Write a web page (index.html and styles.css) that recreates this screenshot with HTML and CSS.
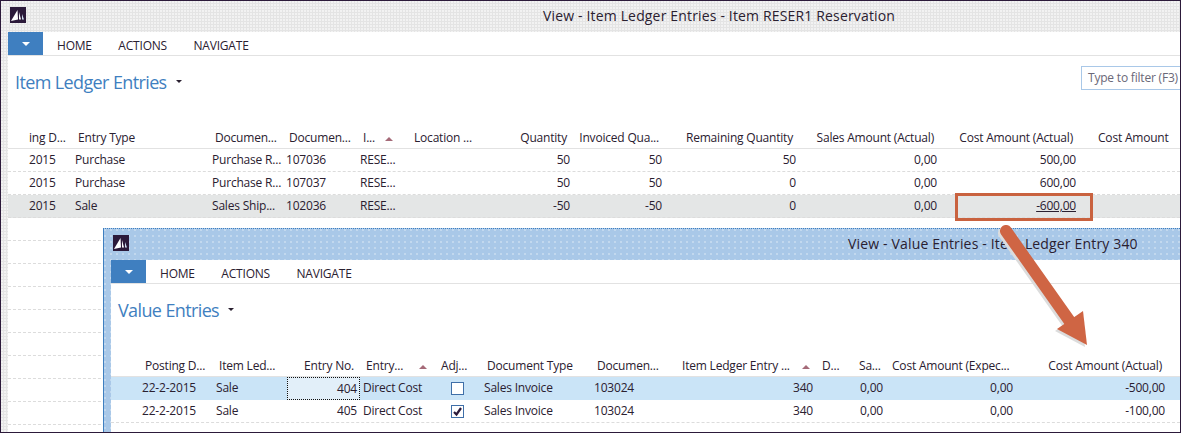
FILE: index.html
```html
<!DOCTYPE html>
<html lang="en">
<head>
    <meta charset="UTF-8">
    <title>Item Ledger Entries</title>
    <link rel="stylesheet" href="styles.css">
</head>
<body>
    <div class="window outer">
        <div class="titlebar">
            <svg class="logo" viewBox="0 0 16 16"><rect width="16" height="16" fill="#2c1a3a"/><path d="M1 14 L7.500 3 L8 12.500 Z" fill="#fff"/><path d="M9 12.500 V5 L11 12.500 Z" fill="#fff"/><path d="M12 12.500 V7 L14 12.500 Z" fill="#cfe0f2"/></svg>
            <div class="wintitle">View - Item Ledger Entries - Item RESER1 Reservation</div>
        </div>
        <div class="pane">
            <div class="ribbon">
                <div class="appbtn"><span class="caret"></span></div>
                <span class="tab">HOME</span>
                <span class="tab">ACTIONS</span>
                <span class="tab">NAVIGATE</span>
            </div>
            <div class="pagehead">
                <span class="pagetitle">Item Ledger Entries</span>
                <span class="titlecaret"></span>
                <div class="filter">Type to filter (F3)</div>
            </div>
            <div class="grid">
                <div class="row head">
                    <div class="cell">ing D...</div>
                    <div class="cell">Entry Type</div>
                    <div class="cell">Documen...</div>
                    <div class="cell">Documen...</div>
                    <div class="cell">I...<span class="sort sort-i"></span></div>
                    <div class="cell">Location ...</div>
                    <div class="cell num">Quantity</div>
                    <div class="cell num">Invoiced Qua...</div>
                    <div class="cell num">Remaining Quantity</div>
                    <div class="cell num">Sales Amount (Actual)</div>
                    <div class="cell num">Cost Amount (Actual)</div>
                    <div class="cell last">Cost Amount</div>
                </div>
                <div class="row">
                    <div class="cell">2015</div>
                    <div class="cell">Purchase</div>
                    <div class="cell">Purchase R...</div>
                    <div class="cell">107036</div>
                    <div class="cell">RESE...</div>
                    <div class="cell"></div>
                    <div class="cell num">50</div>
                    <div class="cell num">50</div>
                    <div class="cell num">50</div>
                    <div class="cell num">0,00</div>
                    <div class="cell num">500,00</div>
                    <div class="cell"></div>
                </div>
                <div class="row">
                    <div class="cell">2015</div>
                    <div class="cell">Purchase</div>
                    <div class="cell">Purchase R...</div>
                    <div class="cell">107037</div>
                    <div class="cell">RESE...</div>
                    <div class="cell"></div>
                    <div class="cell num">50</div>
                    <div class="cell num">50</div>
                    <div class="cell num">0</div>
                    <div class="cell num">0,00</div>
                    <div class="cell num">600,00</div>
                    <div class="cell"></div>
                </div>
                <div class="row current">
                    <div class="cell">2015</div>
                    <div class="cell">Sale</div>
                    <div class="cell">Sales Ship...</div>
                    <div class="cell">102036</div>
                    <div class="cell">RESE...</div>
                    <div class="cell"></div>
                    <div class="cell num">-50</div>
                    <div class="cell num">-50</div>
                    <div class="cell num">0</div>
                    <div class="cell num">0,00</div>
                    <div class="cell num"><span class="link">-600,00</span></div>
                    <div class="cell"></div>
                </div>
                <!-- empty rows, only the dashed lines show -->
                <div class="row"></div>
                <div class="row"></div>
                <div class="row"></div>
                <div class="row"></div>
                <div class="row"></div>
                <div class="row"></div>
                <div class="row"></div>
                <div class="row"></div>
                <div class="row"></div>
            </div>
        </div>
    </div>

    <div class="window inner">
        <div class="titlebar">
            <svg class="logo" viewBox="0 0 16 16"><rect width="16" height="16" fill="#2c1a3a"/><path d="M1 14 L7.500 3 L8 12.500 Z" fill="#fff"/><path d="M9 12.500 V5 L11 12.500 Z" fill="#fff"/><path d="M12 12.500 V7 L14 12.500 Z" fill="#cfe0f2"/></svg>
            <div class="wintitle">View - Value Entries - Item Ledger Entry 340</div>
        </div>
        <div class="pane">
            <div class="ribbon">
                <div class="appbtn"><span class="caret"></span></div>
                <span class="tab">HOME</span>
                <span class="tab">ACTIONS</span>
                <span class="tab">NAVIGATE</span>
            </div>
            <div class="pagehead">
                <span class="pagetitle">Value Entries</span>
                <span class="titlecaret"></span>
            </div>
            <div class="grid">
                <div class="row head">
                    <div class="cell">Posting D...</div>
                    <div class="cell">Item Led...</div>
                    <div class="cell num">Entry No.</div>
                    <div class="cell">Entry...<span class="sort sort-entry"></span></div>
                    <div class="cell tight">Adj...</div>
                    <div class="cell">Document Type</div>
                    <div class="cell">Documen...</div>
                    <div class="cell tight">Item Ledger Entry ...<span class="sort"></span></div>
                    <div class="cell">D...</div>
                    <div class="cell tight">Sa...</div>
                    <div class="cell">Cost Amount (Expec...</div>
                    <div class="cell num">Cost Amount (Actual)</div>
                </div>
                <div class="row selected">
                    <div class="cell">22-2-2015</div>
                    <div class="cell">Sale</div>
                    <div class="cell num focus">404</div>
                    <div class="cell">Direct Cost</div>
                    <div class="cell"><span class="check"></span></div>
                    <div class="cell">Sales Invoice</div>
                    <div class="cell">103024</div>
                    <div class="cell num">340</div>
                    <div class="cell"></div>
                    <div class="cell num">0,00</div>
                    <div class="cell num">0,00</div>
                    <div class="cell num">-500,00</div>
                </div>
                <div class="row">
                    <div class="cell">22-2-2015</div>
                    <div class="cell">Sale</div>
                    <div class="cell num">405</div>
                    <div class="cell">Direct Cost</div>
                    <div class="cell"><span class="check"><svg viewBox="0 0 11 11"><path d="M2 6 L4.500 8.500 L9 2" fill="none" stroke="#2c1a3a" stroke-width="2.200"/></svg></span></div>
                    <div class="cell">Sales Invoice</div>
                    <div class="cell">103024</div>
                    <div class="cell num">340</div>
                    <div class="cell"></div>
                    <div class="cell num">0,00</div>
                    <div class="cell num">0,00</div>
                    <div class="cell num">-100,00</div>
                </div>
            </div>
        </div>
    </div>

    <div class="callout"></div>
    <svg class="arrow" viewBox="0 0 1181 433">
        <line x1="1006" y1="231" x2="1071" y2="323" stroke="#cf6544" stroke-width="12" stroke-linecap="round"/>
        <polygon points="1057,329 1083,311 1087,345" fill="#cf6544"/>
    </svg>
</body>
</html>
```

FILE: styles.css
```css
body {
    margin: 0;
    width: 1181px;
    height: 433px;
    overflow: hidden;
    position: relative;
    background-color: #fff;
    font-family: "Open Sans", "Noto Sans", sans-serif;
    font-size: 12px;
    letter-spacing: -0.2px;
    color: #2a2030;
}

/* windows */
.window {
    box-sizing: border-box;
    display: flex;
    flex-direction: column;
    background-repeat: repeat;
}

.outer {
    height: 433px;
    padding-left: 7px;
    border: 1px solid #2c1a3a;
    background-color: #e4e4e4;
    background-image: radial-gradient(circle at 1px 1px, #f2f2f2 0.9px, transparent 1px);
    background-size: 3px 3px;
}

.inner {
    position: absolute;
    left: 103px;
    top: 228px;
    right: 1px;
    bottom: 1px;
    padding-left: 7px;
    border-top: 1px dotted #3f7fc0;
    border-left: 1px solid #3f7fc0;
    background-color: #a9c8e8;
    background-image: radial-gradient(circle at 1px 1px, #c2d8ee 0.9px, transparent 1px);
    background-size: 6px 6px;
}

.titlebar {
    height: 31px;
    flex: none;
    display: flex;
    align-items: flex-start;
}

.logo {
    width: 16px;
    height: 16px;
    margin: 6px 0 0 2px;
    flex: none;
}

.wintitle {
    font-size: 14px;
    line-height: 30px;
    letter-spacing: 0.16px;
}

.outer .wintitle {
    margin-left: 517px;
}

.inner .wintitle {
    margin-left: 719px;
}

.pane {
    flex: 1;
    background-color: #fff;
    overflow: hidden;
}

/* ribbon */
.ribbon {
    box-sizing: border-box;
    height: 24px;
    display: flex;
    align-items: center;
    border-bottom: 1px solid #e2e2e2;
}

.appbtn {
    width: 35px;
    height: 23px;
    display: flex;
    align-items: center;
    justify-content: center;
    background-color: #3f7fc0;
    margin-right: 14px;
}

.caret {
    width: 0;
    height: 0;
    border-left: 4px solid transparent;
    border-right: 4px solid transparent;
    border-top: 4px solid #fff;
}

.tab {
    margin-right: 26.500px;
    padding-top: 3px;
    font-size: 12px;
}

/* title under the ribbon */
.pagehead {
    height: 71px;
    position: relative;
    display: flex;
    align-items: flex-start;
    padding-left: 7px;
}

.pagetitle {
    font-size: 18px;
    line-height: 24px;
    margin-top: 14px;
    color: #3f7fc0;
    letter-spacing: -0.62px;
}

.titlecaret {
    width: 0;
    height: 0;
    margin: 24px 0 0 9px;
    border-left: 3px solid transparent;
    border-right: 3px solid transparent;
    border-top: 3px solid #2a2030;
}

.filter {
    position: absolute;
    left: 1073px;
    top: 10px;
    right: -2px;
    height: 24px;
    box-sizing: border-box;
    padding-left: 6px;
    line-height: 21px;
    white-space: nowrap;
    border: 1px solid #a9c8e8;
    color: #6a6878;
}

/* grid rows, columns are set per window below */
.row {
    box-sizing: border-box;
    height: 23px;
    display: grid;
    border-bottom: 1px dashed #dcdcdc;
}

.row.head {
    height: 22px;
    border-bottom: 1px solid #e2e2e2;
}

.cell {
    padding: 0 3px;
    line-height: 22px;
    white-space: nowrap;
    overflow: hidden;
}

.head .cell {
    padding: 0 6px;
    line-height: 21px;
}

.head .cell.tight {
    padding-left: 3px;
}

.head .cell.last {
    padding-left: 19px;
}

.num {
    text-align: right;
}

.outer .row {
    grid-template-columns: 64px 137px 74px 74px 51px 82px 83px 92px 134px 141px 139px 101px;
}

.outer .row .cell:first-child {
    padding-left: 21px;
}

.inner .row {
    grid-template-columns: 102px 74px 73px 78px 43px 110px 88px 137px 40px 30px 130px 152px;
}

.inner .row .cell:first-child {
    padding-left: 31px;
}

.inner .row.head .cell:first-child {
    padding-left: 34px;
}

.row.current {
    background-color: #e4e6e6;
}

.row.selected {
    background-color: #cae4f7;
    border-bottom: 0;
}

.focus {
    box-sizing: border-box;
    height: 23px;
    padding: 0 2px;
    line-height: 21px;
    border: 1px dotted #111;
    background-color: #e2eff9;
}

.link {
    text-decoration: underline;
}

.sort {
    display: inline-block;
    vertical-align: middle;
    width: 0;
    height: 0;
    margin-left: 12px;
    border-left: 4px solid transparent;
    border-right: 4px solid transparent;
    border-bottom: 4px solid #a56a78;
}

.sort-i {
    margin-left: 10px;
}

.sort-entry {
    margin-left: 16px;
}

.check {
    box-sizing: border-box;
    display: block;
    width: 13px;
    height: 13px;
    margin: 5px 0 0 10px;
    background-color: #fff;
    border: 1px solid #3f6fa8;
}

.check svg {
    display: block;
    width: 11px;
    height: 11px;
}

/* red annotation on top of the screenshot */
.callout {
    position: absolute;
    left: 955px;
    top: 193px;
    width: 138px;
    height: 28px;
    box-sizing: border-box;
    border: 3px solid #c9623f;
}

.arrow {
    position: absolute;
    left: 0;
    top: 0;
    width: 1181px;
    height: 433px;
    filter: drop-shadow(-2px 2px 0 #dcdcdc);
}
```
